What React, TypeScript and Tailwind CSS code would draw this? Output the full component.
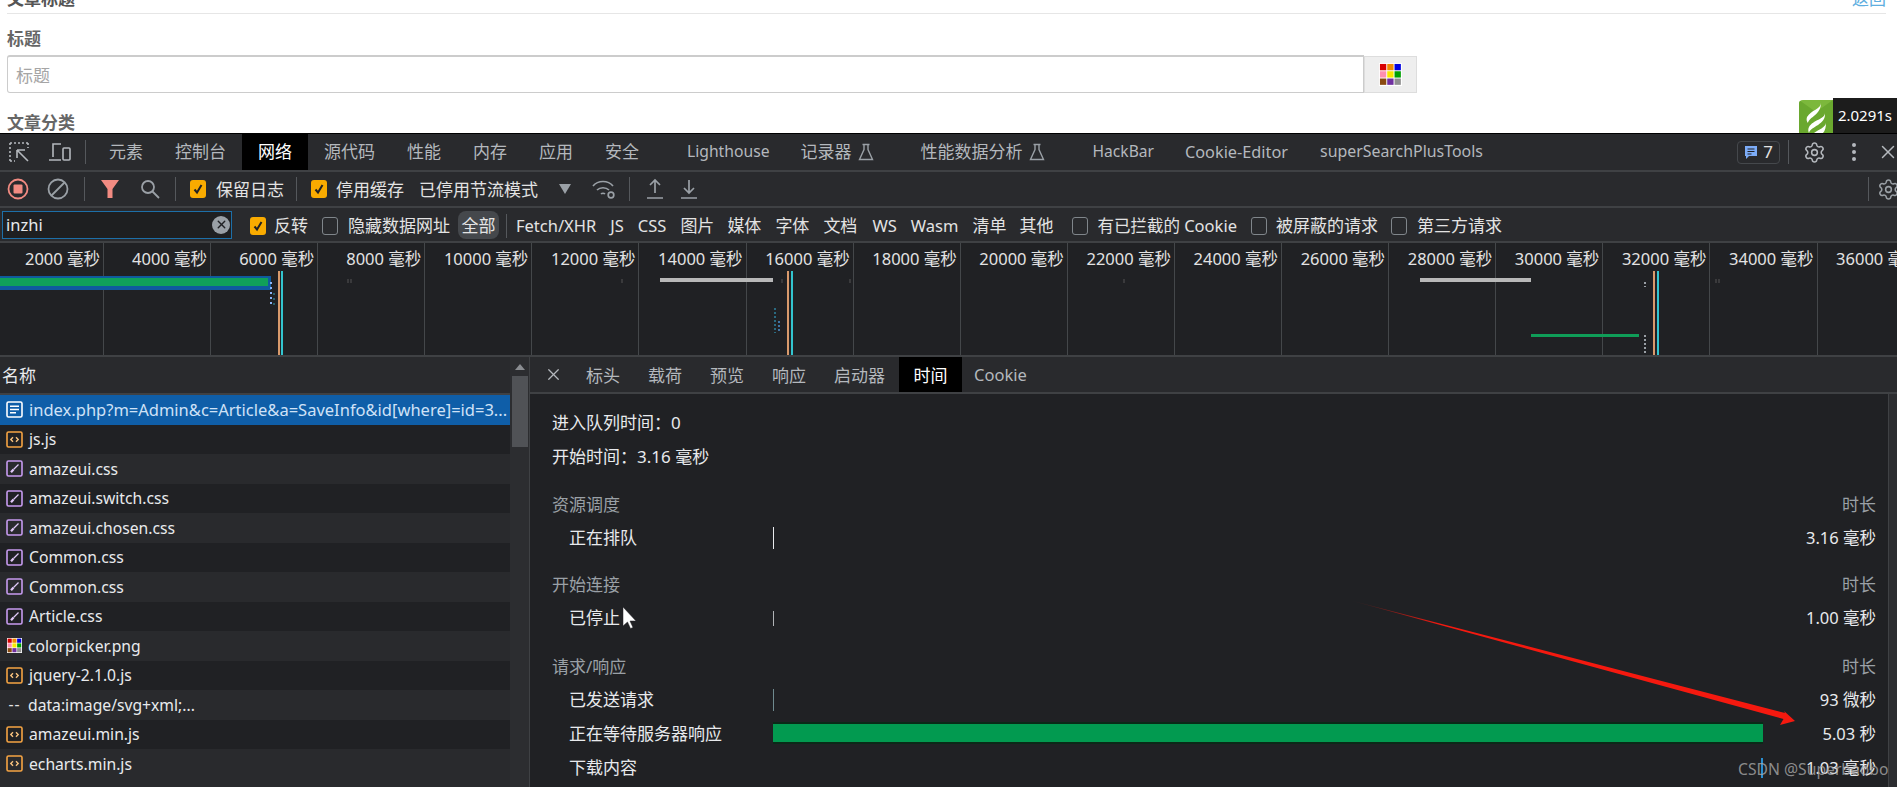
import React from "react";
import { Settings, X } from "lucide-react";

const Flask = () => (
  <svg width="16" height="18" viewBox="0 0 16 18" fill="none" stroke="#9aa0a6" strokeWidth="1.4" className="shrink-0">
    <path d="M4.5 1.5h7M6 1.5v5L1.5 16.5h13L10 6.5v-5" />
  </svg>
);

const Tab = ({ label, active, cls = "", flask = false }: { label: string; active?: boolean; cls?: string; flask?: boolean }) => (
  <div className={"h-full flex items-center px-[16px] gap-[6px] " + (active ? "bg-black text-white " : "text-[#b4b8bd] ") + cls}>
    <span>{label}</span>
    {flask && <Flask />}
  </div>
);

const DetailTab = ({ label, active, cls = "" }: { label: string; active?: boolean; cls?: string }) => (
  <div className={"h-full flex items-center pt-[2px] " + (active ? "bg-black text-white " : "text-[#b4b8bd] ") + cls}>{label}</div>
);

const Div = ({ cls = "" }: { cls?: string }) => <div className={"w-px h-[24px] bg-[#55585c] shrink-0 " + cls} />;

const Check = ({ on, cls = "" }: { on?: boolean; cls?: string }) =>
  on ? (
    <div className={"w-[16px] h-[18px] rounded-[3px] bg-[#f9ab00] flex items-center justify-center shrink-0 " + cls}>
      <svg width="12" height="12" viewBox="0 0 12 12" fill="none" stroke="#202124" strokeWidth="2">
        <path d="M2.5 6.5L5 9.5 9.5 2" />
      </svg>
    </div>
  ) : (
    <div className={"w-[16px] h-[18px] rounded-[3px] border-[1.5px] border-[#80868b] shrink-0 " + cls} />
  );

const ColorGrid = ({ size, cls = "" }: { size: number; cls?: string }) => {
  const colors = ["#d80000", "#f08a00", "#0000e0", "#ff8fb0", "#f8e800", "#00a000", "#8a4a10", "#7030a0", "#909090"];
  return (
    <svg width={size} height={size} viewBox="0 0 24 24" className={cls}>
      <rect width="24" height="24" fill="#fff" />
      {colors.map((c, i) => (
        <rect key={i} x={1 + (i % 3) * 7.6} y={1 + Math.floor(i / 3) * 7.6} width="6.6" height="6.6" fill={c} />
      ))}
    </svg>
  );
};

const FileIcon = ({ type }: { type: string }) => {
  if (type === "doc")
    return (
      <svg width="17" height="17" viewBox="0 0 17 17" fill="none" stroke="#fff" strokeWidth="1.6" className="shrink-0">
        <rect x="1" y="1" width="15" height="15" rx="1.5" />
        <path d="M4 5.2h9M4 8.5h9M4 11.8h6" />
      </svg>
    );
  if (type === "js")
    return (
      <svg width="17" height="17" viewBox="0 0 17 17" fill="none" stroke="#f5a443" strokeWidth="1.6" className="shrink-0">
        <rect x="1" y="1" width="15" height="15" rx="1.5" />
        <path d="M7 6.2L4.8 8.5 7 10.8M10 6.2l2.2 2.3L10 10.8" stroke="#f8c27e" strokeWidth="1.4" />
      </svg>
    );
  if (type === "css")
    return (
      <svg width="17" height="17" viewBox="0 0 17 17" fill="none" stroke="#c79bf0" strokeWidth="1.6" className="shrink-0">
        <rect x="1" y="1" width="15" height="15" rx="1.5" />
        <path d="M12.5 4.5L7.5 9.5" stroke="#e0c8f8" strokeWidth="1.3" />
        <path d="M5 12.2l2.5-2.8" stroke="#e0c8f8" strokeWidth="2.2" />
      </svg>
    );
  if (type === "png") return <ColorGrid size={15} cls="shrink-0 ml-px" />;
  return <span className="w-[15px] ml-px text-center text-[#e3e3e3] leading-none tracking-[1px] shrink-0">--</span>;
};

const rows: [string, string][] = [
  ["doc", "index.php?m=Admin&c=Article&a=SaveInfo&id[where]=id=3..."],
  ["js", "js.js"],
  ["css", "amazeui.css"],
  ["css", "amazeui.switch.css"],
  ["css", "amazeui.chosen.css"],
  ["css", "Common.css"],
  ["css", "Common.css"],
  ["css", "Article.css"],
  ["png", "colorpicker.png"],
  ["js", "jquery-2.1.0.js"],
  ["none", "data:image/svg+xml;..."],
  ["js", "amazeui.min.js"],
  ["js", "echarts.min.js"],
];

const ticks = ["2000", "4000", "6000", "8000", "10000", "12000", "14000", "16000", "18000", "20000", "22000", "24000", "26000", "28000", "30000", "32000", "34000", "36000"];

const Section = ({ label, cls = "" }: { label: string; cls?: string }) => (
  <div className={"flex items-center justify-between h-[33px] text-[#9aa0a6] " + cls}>
    <span>{label}</span>
    <span>时长</span>
  </div>
);

const TimeRow = ({ label, time, children }: { label: string; time: string; children?: React.ReactNode }) => (
  <div className="flex items-center h-[34px] text-[#e8eaed]">
    <span className="w-[221px] pl-[17px] shrink-0">{label}</span>
    <div className="w-[990px] h-full flex items-center shrink-0">{children}</div>
    <span className="flex-1 text-right text-[16.5px]">{time}</span>
  </div>
);

export default function App() {
  return (
    <div className="relative w-[1897px] h-[787px] overflow-hidden flex flex-col bg-white text-[17px] font-['Noto_Sans','Noto_Sans_CJK_SC',sans-serif]">
      {/* Page under the devtools */}
      <div className="relative h-[133px] shrink-0 overflow-hidden bg-white text-[#666] font-semibold">
        <div className="mx-[7px] w-[1879px] h-[14px] border-b-[1.5px] border-[#e6e6e6] flex justify-between items-end">
          <span className="leading-[24px] mb-[2px] text-[#555]">文章标题</span>
          <span className="leading-[24px] mb-[2px] text-[#5eaee0] font-normal">返回</span>
        </div>
        <div className="ml-[7px] mt-[13px] leading-[24px] text-[#666]">标题</div>
        <div className="ml-[7px] mt-[4px] flex h-[38px]">
          <div className="w-[1357px] border border-[#ccc] border-t-2 rounded-l-[3px] pl-[8px] pt-[3px] flex items-center font-normal text-[#a5a5a5]">标题</div>
          <div className="w-[53px] mt-px bg-[#eee] border border-[#ddd] flex items-center justify-center">
            <ColorGrid size={23} />
          </div>
        </div>
        <div className="ml-[7px] mt-[18px] leading-[24px] text-[#666]">文章分类</div>
        <div className="absolute right-0 top-[98px] flex">
          <div className="mt-[2px] w-[34px] h-[33px] rounded-tl-[4px] bg-[#7cb83c] flex items-center justify-center overflow-hidden">
            <svg width="34" height="33" viewBox="0 0 34 33">
              <path d="M0 0L17 12 34 0V33H0Z" fill="#6aa82f" />
              <path d="M22 3C22 9 12 10 8 17C7 20 8 22 9 23C10 17 22 15 22 3Z" fill="#fff" />
              <path d="M26 13C26 19 14 20 10 27C9 29 9 31 10 33C12 26 27 25 26 13Z" fill="#fff" />
              <path d="M27 23C26 28 20 29 15 33H24C26 31 27 27 27 23Z" fill="#fff" />
            </svg>
          </div>
          <div className="w-[64px] h-[35px] bg-[#1c1c1c] text-white font-normal text-[15px] flex items-center justify-center">2.0291s</div>
        </div>
      </div>

      {/* DevTools */}
      <div className="flex-1 min-h-0 flex flex-col bg-[#292a2d] border-t border-black text-[#e3e3e3] font-normal">
        {/* Tab bar */}
        <div className="h-[38px] shrink-0 flex items-center border-b-2 border-[#3f4144]">
          <svg width="22" height="22" viewBox="0 0 22 22" fill="none" stroke="#b4b8bd" strokeWidth="1.6" className="ml-[8px] shrink-0">
            <path d="M2 2h18M2 2v18M2 20h5M20 2v5" strokeDasharray="2 2" />
            <path d="M9 9h8M9 9v8M9 9l11 11" />
          </svg>
          <svg width="24" height="20" viewBox="0 0 24 20" fill="none" stroke="#b4b8bd" strokeWidth="1.6" className="ml-[18px] shrink-0">
            <path d="M13 2H5v13M1 18h12" />
            <rect x="15" y="6" width="7" height="12" rx="1" />
          </svg>
          <Div cls="ml-[13px]" />
          <div className="ml-[7px] h-full flex items-center">
            <Tab label="元素" />
            <Tab label="控制台" />
            <Tab label="网络" active />
            <Tab label="源代码" />
            <Tab label="性能" />
            <Tab label="内存" />
            <Tab label="应用" />
            <Tab label="安全" />
            <Tab label="Lighthouse" cls="ml-[16px] text-[15.7px]" />
            <Tab label="记录器" flask cls="-ml-[1px]" />
            <Tab label="性能数据分析" flask cls="ml-[15px]" />
            <Tab label="HackBar" cls="ml-[16px] text-[15.6px]" />
            <Tab label="Cookie-Editor" cls="-ml-[1px] text-[16.3px]" />
            <Tab label="superSearchPlusTools" cls="text-[15.9px]" />
          </div>
          <div className="ml-auto flex items-center h-full pr-[1px]">
            <div className="w-[43px] h-[23px] border border-[#45484c] rounded-[4px] flex items-center justify-center gap-[5px] text-[#e3e3e3]">
              <svg width="14" height="14" viewBox="0 0 14 14">
                <path d="M1 1h12v10H5l-3 3v-3H1Z" fill="#7cacf8" />
                <path d="M3.5 4h7M3.5 6.5h7M3.5 9h4" stroke="#202124" strokeWidth="1" />
              </svg>
              <span>7</span>
            </div>
            <Div cls="ml-[8px]" />
            <Settings size={23} strokeWidth={1.6} className="ml-[14px] text-[#b4b8bd]" />
            <svg width="6" height="20" viewBox="0 0 6 20" className="ml-[25px] shrink-0" fill="#b4b8bd">
              <circle cx="3" cy="3" r="2" />
              <circle cx="3" cy="10" r="2" />
              <circle cx="3" cy="17" r="2" />
            </svg>
            <X size={22} strokeWidth={1.6} className="ml-[20px] -mr-[3px] text-[#b4b8bd]" />
          </div>
        </div>

        {/* Network toolbar */}
        <div className="h-[36px] shrink-0 flex items-center border-b-2 border-[#3f4144]">
          <svg width="22" height="22" viewBox="0 0 22 22" className="ml-[7px] shrink-0">
            <circle cx="11" cy="11" r="9.5" fill="none" stroke="#f28b82" strokeWidth="1.8" />
            <rect x="6.5" y="6.5" width="9" height="9" rx="1" fill="#f28b82" />
          </svg>
          <svg width="22" height="22" viewBox="0 0 22 22" fill="none" stroke="#9aa0a6" strokeWidth="1.8" className="ml-[18px] shrink-0">
            <circle cx="11" cy="11" r="9.5" />
            <path d="M4.5 17.5L17.5 4.5" />
          </svg>
          <Div cls="ml-[15px]" />
          <svg width="18" height="20" viewBox="0 0 18 20" className="ml-[16px] shrink-0">
            <path d="M0 1h18L11.5 10v9h-5v-9Z" fill="#f28b82" />
          </svg>
          <svg width="20" height="20" viewBox="0 0 20 20" fill="none" stroke="#9aa0a6" strokeWidth="1.8" className="ml-[21px] shrink-0">
            <circle cx="8" cy="8" r="6" />
            <path d="M12.5 12.5L19 19" />
          </svg>
          <Div cls="ml-[15px]" />
          <Check on cls="ml-[14px]" />
          <span className="ml-[10px] pt-[2px]">保留日志</span>
          <Div cls="ml-[12px]" />
          <Check on cls="ml-[14px]" />
          <span className="ml-[9px] pt-[2px]">停用缓存</span>
          <span className="ml-[15px] pt-[2px]">已停用节流模式</span>
          <svg width="12" height="10" viewBox="0 0 12 10" className="ml-[21px] shrink-0" fill="#9aa0a6">
            <path d="M0 0h12L6 10Z" />
          </svg>
          <svg width="24" height="22" viewBox="0 0 24 22" fill="none" stroke="#9aa0a6" strokeWidth="1.7" className="ml-[21px] shrink-0">
            <path d="M1 8c5-6 15-6 20 0M5 12c3-3 9-3 12 0M9 16c1-1 3-1 4 0" />
            <circle cx="19" cy="17" r="2.8" />
          </svg>
          <Div cls="ml-[13px]" />
          <svg width="18" height="22" viewBox="0 0 18 22" fill="none" stroke="#9aa0a6" strokeWidth="1.7" className="ml-[16px] shrink-0">
            <path d="M9 15V2M4 7l5-5 5 5M1 20h16" />
          </svg>
          <svg width="18" height="22" viewBox="0 0 18 22" fill="none" stroke="#9aa0a6" strokeWidth="1.7" className="ml-[16px] shrink-0">
            <path d="M9 2v13M4 10l5 5 5-5M1 20h16" />
          </svg>
          <div className="ml-auto flex items-center">
            <Div />
            <Settings size={23} strokeWidth={1.6} className="ml-[8px] -mr-[3px] text-[#9aa0a6]" />
          </div>
        </div>

        {/* Filter row */}
        <div className="h-[35px] shrink-0 flex items-center border-b-2 border-[#3f4144] pt-[3px]">
          <div className="ml-[2px] -mt-[3px] w-[230px] h-[28px] bg-[#1e1f21] border border-[#1d6fa8] flex items-center justify-between pl-[3px] pr-[1px] text-[#e8eaed]">
            <span className="text-[16.5px] pt-[2px]">inzhi</span>
            <span className="w-[18px] h-[18px] rounded-full bg-[#9aa0a6] flex items-center justify-center">
              <X size={13} strokeWidth={2.5} className="text-[#202124]" />
            </span>
          </div>
          <Check on cls="ml-[18px]" />
          <span className="ml-[8px]">反转</span>
          <Check cls="ml-[14px]" />
          <span className="ml-[10px]">隐藏数据网址</span>
          <span className="ml-[8px] -mt-[3px] pt-[2px] w-[41px] h-[28px] rounded-[8px] bg-[#45484c] flex items-center justify-center">全部</span>
          <Div cls="ml-[7px]" />
          <span className="ml-[9px] text-[16.5px]">Fetch/XHR</span>
          <span className="ml-[14px] text-[16.5px]">JS</span>
          <span className="ml-[14px] text-[16.5px]">CSS</span>
          <span className="ml-[14px]">图片</span>
          <span className="ml-[13px]">媒体</span>
          <span className="ml-[14px]">字体</span>
          <span className="ml-[14px]">文档</span>
          <span className="ml-[15px] text-[16.5px]">WS</span>
          <span className="ml-[14px] text-[16.5px]">Wasm</span>
          <span className="ml-[14px]">清单</span>
          <span className="ml-[13px]">其他</span>
          <Check cls="ml-[19px]" />
          <span className="ml-[9px] text-[16.5px]">有已拦截的 Cookie</span>
          <Check cls="ml-[14px]" />
          <span className="ml-[9px]">被屏蔽的请求</span>
          <Check cls="ml-[13px]" />
          <span className="ml-[10px]">第三方请求</span>
        </div>

        {/* Timeline */}
        <div className="relative h-[114px] shrink-0 flex bg-[#202124] border-b-2 border-[#3f4144] overflow-hidden text-[16.5px]">
          {ticks.map((t, i) => (
            <div key={t} className={(i === 0 ? "w-[104px] " : "w-[107.1px] ") + "shrink-0 h-full border-r border-[#44474a] text-right pr-[3px] leading-[32px] whitespace-nowrap"}>
              {t} 毫秒
            </div>
          ))}
          <svg className="absolute left-0 top-0" width="1897" height="114">
            <rect x="0" y="33" width="271" height="14" fill="#0f5a9e" />
            <rect x="0" y="35" width="268" height="8" fill="#10a05a" />
            <rect x="278" y="28" width="2" height="86" fill="#d99a6c" />
            <rect x="281" y="28" width="2" height="86" fill="#33c5cf" />
            <path d="M271 39v25" stroke="#8ab4f8" strokeWidth="2" strokeDasharray="2 3" />
            <path d="M274 50v14" stroke="#33a0b0" strokeWidth="1" strokeDasharray="2 3" />
            <rect x="660" y="35" width="113" height="4" fill="#b8b8b8" />
            <rect x="1420" y="35" width="111" height="4" fill="#b8b8b8" />
            <rect x="1531" y="91" width="108" height="3" fill="#0f9d58" />
            <rect x="787" y="28" width="2" height="86" fill="#d99a6c" />
            <rect x="791" y="28" width="2" height="86" fill="#33c5cf" />
            <rect x="1653" y="28" width="2" height="86" fill="#d99a6c" />
            <rect x="1657" y="28" width="2" height="86" fill="#33c5cf" />
            <path d="M775 65v25" stroke="#2a6a80" strokeWidth="2" strokeDasharray="2 2" />
            <path d="M779 78v12" stroke="#4a90d0" strokeWidth="1.5" strokeDasharray="2 2" />
            <path d="M1645 39v5M1645 92v21" stroke="#9aa0a6" strokeWidth="2" strokeDasharray="2 2" />
            <path d="M348 36v4M351 36v4M622 36v4M782 36v4M850 36v4M1124 36v4M1716 36v4M1719 36v4" stroke="#555" strokeWidth="1" />
          </svg>
        </div>

        {/* Bottom split */}
        <div className="flex-1 min-h-0 flex">
          <div className="w-[510px] shrink-0 flex flex-col overflow-hidden">
            <div className="h-[38px] shrink-0 flex items-center pl-[2px] pt-[2px] border-b-2 border-[#3f4144] text-[#e8eaed]">名称</div>
            {rows.map(([type, name], i) => (
              <div
                key={i}
                className={
                  "h-[29.5px] shrink-0 flex items-center gap-[6px] pl-[6px] whitespace-nowrap " +
                  (i === 0 ? "bg-[#0f5ea8] text-[#cfe2f7] text-[16.5px]" : i % 2 === 1 ? "bg-[#202124] text-[#e8eaed] text-[15.7px]" : "bg-[#292a2d] text-[#e8eaed] text-[15.7px]")
                }
              >
                <FileIcon type={type} />
                <span className="pt-[2px]">{name}</span>
              </div>
            ))}
          </div>
          <div className="w-[20px] shrink-0 bg-[#2c2d30] border-r border-[#3f4144] flex flex-col items-center">
            <svg width="10" height="6" viewBox="0 0 10 6" className="mt-[7px]" fill="#8a8d91">
              <path d="M5 0l5 6H0Z" />
            </svg>
            <div className="mt-[6px] w-[16px] h-[71px] bg-[#505256]" />
          </div>

          <div className="flex-1 min-w-0 flex flex-col">
            <div className="h-[37px] shrink-0 flex items-center border-b-2 border-[#3f4144] bg-[#292a2d]">
              <X size={19} strokeWidth={1.6} className="ml-[14px] text-[#b4b8bd]" />
              <div className="ml-[9px] h-full flex items-center">
                <DetailTab label="标头" cls="px-[14px]" />
                <DetailTab label="载荷" cls="px-[14px]" />
                <DetailTab label="预览" cls="px-[14px]" />
                <DetailTab label="响应" cls="px-[14px]" />
                <DetailTab label="启动器" cls="px-[14px]" />
                <DetailTab label="时间" active cls="px-[14.5px]" />
                <DetailTab label="Cookie" cls="px-[12px] text-[16.5px]" />
              </div>
            </div>
            <div className="flex-1 min-h-0 flex bg-[#202124]">
              <div className="flex-1 min-w-0 pl-[22px] pr-[12px] pt-[12px] overflow-hidden">
                <div className="h-[34px] flex items-center text-[#e8eaed]">进入队列时间：0</div>
                <div className="h-[34px] flex items-center text-[#e8eaed]">开始时间：3.16 毫秒</div>
                <Section label="资源调度" cls="mt-[14px]" />
                <TimeRow label="正在排队" time="3.16 毫秒">
                  <div className="w-px h-[22px] bg-[#e8eaed]" />
                </TimeRow>
                <Section label="开始连接" cls="mt-[13px]" />
                <TimeRow label="已停止" time="1.00 毫秒">
                  <div className="w-px h-[15px] bg-[#b0b3b6]" />
                </TimeRow>
                <Section label="请求/响应" cls="mt-[15px]" />
                <TimeRow label="已发送请求" time="93 微秒">
                  <div className="w-px h-[22px] bg-[#6f8a8f]" />
                </TimeRow>
                <TimeRow label="正在等待服务器响应" time="5.03 秒">
                  <div className="w-[990px] h-[22px] mb-[2px] bg-[#029a50] border-y-2 border-t-[#0a2a18] border-b-[#0a2a18]" />
                </TimeRow>
                <TimeRow label="下载内容" time="1.03 毫秒">
                  <div className="w-[2px] h-[20px] ml-[988px] bg-[#2a8fd0]" />
                </TimeRow>
              </div>
              <div className="w-[9px] shrink-0 bg-[#2c2d30] border-l border-[#3f4144]" />
            </div>
          </div>
        </div>
      </div>

      {/* Annotation overlays */}
      <svg className="absolute left-0 top-0 pointer-events-none" width="1897" height="787">
        <defs>
          <linearGradient id="fade" gradientUnits="userSpaceOnUse" x1="1349" y1="600" x2="1440" y2="624">
            <stop offset="0" stopColor="#f5190f" stopOpacity="0" />
            <stop offset="1" stopColor="#f5190f" />
          </linearGradient>
        </defs>
        <path d="M1349 600L1785 713 1784 711 1795 721 1780 725 1783.5 719Z" fill="url(#fade)" />
        <path d="M623 607v19l4.5-4 3 6.5 2.5-1-3-6.5h6Z" fill="#fff" stroke="#202124" strokeWidth="0.5" />
      </svg>
      <div className="absolute left-[1738px] top-[757px] text-[15.7px] leading-[24px] text-[#a8a8a8]/80 whitespace-nowrap">CSDN @Superbaobo</div>
    </div>
  );
}
